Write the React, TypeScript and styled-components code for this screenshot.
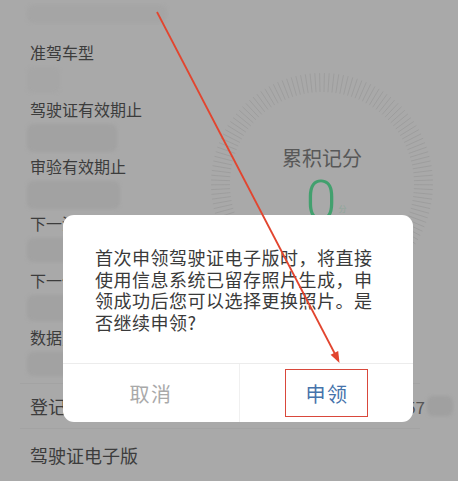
import React from "react";
import styled, { createGlobalStyle } from "styled-components";

const Global = createGlobalStyle`
  html, body { margin: 0; padding: 0; }
  body { font-family: "Noto Sans CJK SC", "Noto Sans", sans-serif; }
`;

const Page = styled.div`
  position: relative;
  width: 458px;
  height: 481px;
  overflow: hidden;
  background: #a9a9a9;
`;

const TopGrid = styled.div`
  display: grid;
  grid-template-columns: 210px 224px;
  height: 383px;
`;

const InfoList = styled.div`
  display: flex;
  flex-direction: column;
  margin-top: -16px;
  padding-left: 27px;
`;

const InfoRow = styled.div`
  height: 57px;
  display: flex;
  flex-direction: column;
  gap: 4px;
`;

const Label = styled.div<{ $shift?: number }>`
  height: 22px;
  line-height: 22px;
  padding-left: 3px;
  margin-top: ${(p) => p.$shift ?? 0}px;
  font-size: 16px;
  color: #3c3c3c;
  white-space: nowrap;
`;

const Blur = styled.div<{ $w: number; $h: number; $tone?: string }>`
  width: ${(p) => p.$w}px;
  height: ${(p) => p.$h}px;
  border-radius: 6px;
  background: ${(p) => p.$tone ?? "#a2a2a2"};
  filter: blur(1.5px);
`;

const GaugeWrap = styled.div`
  position: relative;
  padding-top: 72px;
  width: 224px;
`;

const GaugeText = styled.div`
  position: absolute;
  top: 146px;
  left: 0;
  right: 0;
  display: flex;
  flex-direction: column;
  align-items: center;
`;

const GaugeLabel = styled.div`
  font-size: 20px;
  line-height: 24px;
  color: #585858;
`;

const ScoreLine = styled.div`
  display: flex;
  align-items: flex-end;
  margin-top: 3px;
  padding-left: 8px;
`;

const Score = styled.span`
  font-family: Roboto, "Noto Sans", sans-serif;
  font-weight: 300;
  font-size: 56px;
  line-height: 56px;
  color: #42a06e;
`;

const ScoreUnit = styled.span`
  font-size: 8px;
  line-height: 8px;
  color: #8fa79a;
  margin: 0 0 16px 2px;
`;

const BottomRow = styled.div<{ $h: number }>`
  height: ${(p) => p.$h}px;
  display: flex;
  align-items: center;
  justify-content: space-between;
  margin: 0 38px 0 20px;
  padding-left: 10px;
  box-sizing: border-box;
  border-top: 1px solid #a3a3a3;
  font-size: 18px;
  color: #3c3c3c;
`;

const RowValue = styled.div`
  display: flex;
  align-items: center;
  gap: 2px;
  margin-right: -33px;
  font-size: 17px;
  color: #555;
`;

const Dialog = styled.div`
  position: absolute;
  left: 63px;
  top: 215px;
  width: 350px;
  height: 207px;
  background: #fff;
  border-radius: 11px;
  display: flex;
  flex-direction: column;
  overflow: hidden;
`;

const Message = styled.div`
  flex: 1;
  padding: 32px 38px 0 32px;
  font-size: 18px;
  letter-spacing: 0.5px;
  line-height: 21.5px;
  color: #3a3a3a;
`;

const Actions = styled.div`
  height: 58px;
  display: grid;
  grid-template-columns: 176px 1fr;
  border-top: 1px solid #ececec;
`;

const ActionButton = styled.div<{ $primary?: boolean }>`
  display: flex;
  align-items: center;
  justify-content: center;
  font-size: 20px;
  letter-spacing: 1.5px;
  color: ${(p) => (p.$primary ? "#4673ab" : "#a9a9a9")};
  border-left: ${(p) => (p.$primary ? "1px solid #f0f0f0" : "none")};
`;

const Highlight = styled.span`
  width: 83px;
  height: 48px;
  box-sizing: border-box;
  border: 1.5px solid #d9483b;
  display: flex;
  align-items: center;
  justify-content: center;
  padding-left: 1px;
`;

const Annotation = styled.svg`
  position: absolute;
  left: 0;
  top: 0;
  pointer-events: none;
`;

function Gauge() {
  const cx = 112;
  const cy = 112;
  const ticks = [];
  const n = 110;
  for (let i = 0; i < n; i++) {
    const a = ((-225 + (270 * i) / (n - 1)) * Math.PI) / 180;
    const r1 = 92;
    const r2 = 111;
    ticks.push(
      <line
        key={i}
        x1={cx + r1 * Math.cos(a)}
        y1={cy + r1 * Math.sin(a)}
        x2={cx + r2 * Math.cos(a)}
        y2={cy + r2 * Math.sin(a)}
        stroke="#9c9c9c"
        strokeWidth={0.9}
      />
    );
  }
  return (
    <svg width={224} height={224} viewBox="0 0 224 224">
      {ticks}
    </svg>
  );
}

const rows: { label: string; w: number; h: number; tone?: string; shift?: number }[] = [
  { label: "档案编号", w: 140, h: 18, tone: "#a5a5a5", shift: -5 },
  { label: "准驾车型", w: 33, h: 26, tone: "#a6a6a6" },
  { label: "驾驶证有效期止", w: 90, h: 28 },
  { label: "审验有效期止", w: 93, h: 28 },
  { label: "下一清分日期", w: 60, h: 24 },
  { label: "下一体检日期", w: 80, h: 26 },
  { label: "数据更新时间", w: 60, h: 24 },
];

export default function App() {
  return (
    <>
      <Global />
      <Page>
        <TopGrid>
          <InfoList>
            {rows.map((r) => (
              <InfoRow key={r.label}>
                <Label $shift={r.shift}>{r.label}</Label>
                <Blur $w={r.w} $h={r.h} $tone={r.tone} />
              </InfoRow>
            ))}
          </InfoList>
          <GaugeWrap>
            <Gauge />
            <GaugeText>
              <GaugeLabel>累积记分</GaugeLabel>
              <ScoreLine>
                <Score>0</Score>
                <ScoreUnit>分</ScoreUnit>
              </ScoreLine>
            </GaugeText>
          </GaugeWrap>
        </TopGrid>
        <BottomRow $h={45}>
          登记手机号码
          <RowValue>
            57
            <Blur $w={26} $h={20} $tone="#a0a0a0" />
          </RowValue>
        </BottomRow>
        <BottomRow $h={53}>驾驶证电子版</BottomRow>

        <Dialog>
          <Message>
            首次申领驾驶证电子版时，将直接使用信息系统已留存照片生成，申领成功后您可以选择更换照片。是否继续申领?
          </Message>
          <Actions>
            <ActionButton>取消</ActionButton>
            <ActionButton $primary>
              <Highlight>申领</Highlight>
            </ActionButton>
          </Actions>
        </Dialog>

        <Annotation width={458} height={481} viewBox="0 0 458 481">
          <line x1={157} y1={12} x2={335} y2={354} stroke="#e2452f" strokeWidth={1.8} />
          <polygon points="339.5,363 330.6,354.8 338.2,350.9" fill="#e2452f" />
        </Annotation>
      </Page>
    </>
  );
}
